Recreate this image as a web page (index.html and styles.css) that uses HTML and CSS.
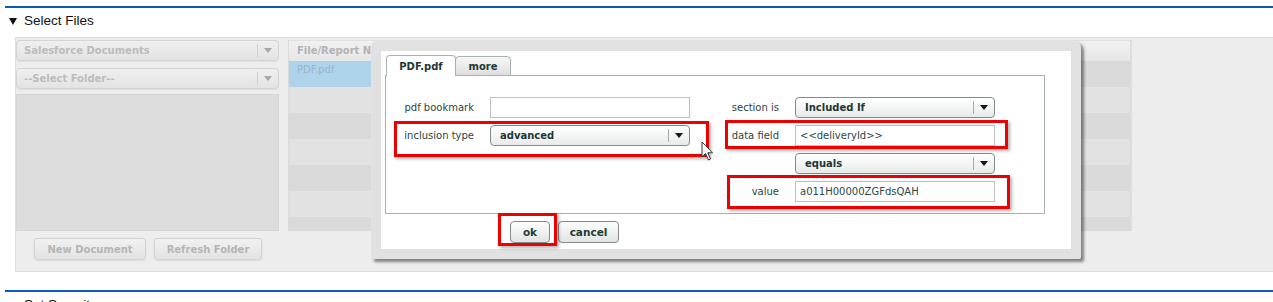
FILE: index.html
```html
<!DOCTYPE html>
<html lang="en">
<head>
  <meta charset="UTF-8">
  <meta name="viewport" content="width=device-width, initial-scale=1.0">
  <title>Select Files</title>
  <link rel="stylesheet" href="styles.css">
</head>
<body>
  <!-- Select Files -->
  <section class="block">
    <h2 class="block-title"><span class="caret"></span>Select Files</h2>

    <div class="panel">
      <div class="sidebar">
        <div class="pick">Salesforce Documents<span class="pick-arrow"></span></div>
        <div class="pick">--Select Folder--<span class="pick-arrow"></span></div>
        <div class="folder-tree"></div>
        <div class="side-actions">
          <button class="soft-btn">New Document</button>
          <button class="soft-btn">Refresh Folder</button>
        </div>
      </div>

      <div class="file-table">
        <div class="file-row head"><div class="cell">File/Report Name</div><div class="cell"></div></div>
        <div class="file-row"><div class="cell selected">PDF.pdf</div><div class="cell"></div></div>
        <div class="file-row"><div class="cell"></div><div class="cell"></div></div>
        <div class="file-row"><div class="cell"></div><div class="cell"></div></div>
        <div class="file-row"><div class="cell"></div><div class="cell"></div></div>
        <div class="file-row"><div class="cell"></div><div class="cell"></div></div>
        <div class="file-row"><div class="cell"></div><div class="cell"></div></div>
        <div class="file-row"><div class="cell"></div><div class="cell"></div></div>
      </div>

      <!-- Document options dialog -->
      <div class="dialog">
        <div class="dialog-body">
          <div class="tabs">
            <div class="tab active">PDF.pdf</div>
            <div class="tab">more</div>
          </div>

          <div class="tab-panel">
            <label class="field-label">pdf bookmark</label>
            <input class="text-field" type="text" value="">
            <label class="field-label">section is</label>
            <div class="dropdown"><span class="dropdown-text">Included If</span><span class="dropdown-toggle"></span></div>

            <label class="field-label">inclusion type</label>
            <div class="dropdown"><span class="dropdown-text">advanced</span><span class="dropdown-toggle"></span></div>
            <label class="field-label">data field</label>
            <input class="text-field" type="text" value="&lt;&lt;deliveryId&gt;&gt;">

            <div class="dropdown col-4"><span class="dropdown-text">equals</span><span class="dropdown-toggle"></span></div>

            <label class="field-label col-3">value</label>
            <input class="text-field" type="text" value="a011H00000ZGFdsQAH">
          </div>

          <div class="dialog-actions">
            <button class="btn">ok</button>
            <button class="btn">cancel</button>
          </div>
        </div>

        <!-- annotation boxes drawn over the dialog -->
        <span class="mark mark-type"></span>
        <span class="mark mark-field"></span>
        <span class="mark mark-value"></span>
        <span class="mark mark-ok"></span>

        <svg class="cursor" width="13" height="21" viewBox="0 0 13 21">
          <path d="M1 1 L1 16 L4.5 12.5 L7.5 19 L9.5 18 L6.8 11.8 L11.5 11.8 Z" fill="#fff" stroke="#333" stroke-width="1"/>
        </svg>
      </div>
    </div>
  </section>

  <!-- Set Security -->
  <section class="block">
    <h2 class="block-title"><span class="caret"></span>Set Security</h2>
  </section>
</body>
</html>
```

FILE: styles.css
```css
/* Reset */
* {
  box-sizing: border-box;
}

body {
  margin: 0;
  padding: 6px 0 0 5px;
  background: #fff;
  font-family: "DejaVu Sans", Verdana, sans-serif;
  font-size: 10px;
  color: #2b4545;
  overflow: hidden;
}

/* Section blocks */
.block {
  border-top: 2px solid #0b5cb6;
  margin-bottom: 18px;
}

.block-title {
  margin: 0;
  padding: 5px 0 8px 4px;
  height: 29px;
  font-family: "Liberation Sans", Arial, sans-serif;
  font-size: 13.5px;
  line-height: 16px;
  font-weight: normal;
  color: #111;
  display: flex;
  align-items: center;
}

.caret {
  width: 0;
  height: 0;
  border-left: 4px solid transparent;
  border-right: 4px solid transparent;
  border-top: 7px solid #111;
  margin-right: 7px;
}

/* Faded background panel */
.panel {
  position: relative;
  margin-left: 10px;
  height: 235px;
  padding-top: 2px;
  background: #ededed;
  border: 1px solid #dcdcdc;
  border-right: none;
  display: grid;
  grid-template-columns: 263px 843px;
  column-gap: 9px;
  align-items: start;
}

.sidebar {
  display: flex;
  flex-direction: column;
}

.pick {
  position: relative;
  height: 21px;
  padding-left: 7px;
  display: flex;
  align-items: center;
  font-weight: bold;
  color: #bcbcbc;
  background: linear-gradient(#efefef, #e3e3e3);
  border: 1px solid #d4d4d4;
  border-radius: 4px;
  box-shadow: 0 1px 1px rgba(0, 0, 0, 0.06);
  margin-bottom: 7px;
}

.pick-arrow {
  position: absolute;
  right: 0;
  top: 3px;
  width: 21px;
  height: 13px;
  border-left: 1px solid #d2d2d2;
}

.pick-arrow::after {
  content: "";
  position: absolute;
  left: 6px;
  top: 4px;
  border-left: 4px solid transparent;
  border-right: 4px solid transparent;
  border-top: 5px solid #a8a8a8;
}

.folder-tree {
  height: 137px;
  margin-top: -2px;
  background: #dcdcdc;
  border: 1px solid #d6d6d6;
}

.side-actions {
  display: flex;
  gap: 8px;
  padding: 7px 0 0 18px;
}

.soft-btn {
  height: 22px;
  padding: 0;
  white-space: nowrap;
  font-family: "DejaVu Sans", Verdana, sans-serif;
  font-size: 10px;
  font-weight: bold;
  color: #b5b5b5;
  background: linear-gradient(#f1f1f1, #e2e2e2);
  border: 1px solid #d2d2d2;
  border-radius: 3px;
  box-shadow: 0 1px 2px rgba(0, 0, 0, 0.08);
}

.soft-btn:first-child {
  width: 112px;
}

.soft-btn:last-child {
  width: 108px;
}

/* File table */
.file-table {
  height: 191px;
  overflow: hidden;
  border: 1px solid #dadada;
  border-top: none;
  box-shadow: 1px 0 1px rgba(0, 0, 0, 0.05);
}

.file-row {
  display: grid;
  grid-template-columns: 420px 1fr;
  height: 26px;
}

.file-row.head {
  height: 21px;
  background: linear-gradient(#f0f0f0, #e6e6e6);
  border-top: 1px solid #e0e0e0;
  font-weight: bold;
  color: #b3b3b3;
}

.file-row.head .cell {
  padding: 4px 8px 0;
}

.file-row:nth-child(even) {
  background: #dadada;
}

.file-row:nth-child(odd):not(.head) {
  background: #e2e2e2;
}

.cell {
  padding: 3px 8px 0;
}

.cell.selected {
  background: #aed4ec;
  color: #98b4c6;
}

/* Dialog */
.dialog {
  position: absolute;
  left: 355px;
  top: 2px;
  width: 710px;
  height: 219px;
  padding: 11px 10px 10px;
  background: #e1e1e1;
  border-radius: 8px 8px 2px 2px;
  box-shadow: 3px 3px 3px rgba(0, 0, 0, 0.45);
}

.dialog-body {
  height: 198px;
  background: #fff;
  padding: 4px 0 0 4px;
}

.tabs {
  display: flex;
  align-items: flex-end;
  height: 21px;
  margin: 0 0 -1px 1px;
}

.tab {
  height: 20px;
  display: flex;
  align-items: center;
  justify-content: center;
  width: 56px;
  font-weight: bold;
  color: #1f3838;
  background: linear-gradient(#f7f7f7, #dedede);
  border: 1px solid #a7b3b3;
  border-radius: 4px 4px 0 0;
}

.tab.active {
  position: relative;
  z-index: 1;
  width: 70px;
  height: 21px;
  margin-right: -1px;
  background: #fff;
  border-bottom: none;
}

.tab-panel {
  width: 660px;
  height: 139px;
  border: 1px solid #a7b3b3;
  padding-top: 21px;
  display: grid;
  grid-template-columns: 88px 200px 73px 200px;
  grid-auto-rows: 21px;
  column-gap: 16px;
  row-gap: 7px;
}

.field-label {
  display: flex;
  align-items: center;
  justify-content: flex-end;
  color: #2b4545;
}

.col-3 {
  grid-column: 3;
}

.col-4 {
  grid-column: 4;
}

.text-field {
  height: 21px;
  margin: 0;
  padding: 0 4px;
  font-family: "DejaVu Sans", Verdana, sans-serif;
  font-size: 10px;
  color: #2b4848;
  border: 1px solid #b9c2c2;
  background: #fff;
  outline: none;
}

.dropdown {
  height: 21px;
  display: flex;
  align-items: center;
  padding-left: 9px;
  font-weight: bold;
  color: #1d3636;
  background: linear-gradient(#fff, #e8ebeb);
  border: 1px solid #7f8c8c;
  border-radius: 4px;
}

.dropdown-text {
  flex: 1;
}

.dropdown-toggle {
  position: relative;
  width: 21px;
  height: 13px;
  border-left: 1px solid #a2aaaa;
}

.dropdown-toggle::after {
  content: "";
  position: absolute;
  left: 6px;
  top: 4px;
  border-left: 4px solid transparent;
  border-right: 4px solid transparent;
  border-top: 5px solid #161616;
}

.dialog-actions {
  display: flex;
  gap: 8px;
  margin: 7px 0 0 125px;
}

.btn {
  height: 22px;
  padding: 0;
  font-family: "DejaVu Sans", Verdana, sans-serif;
  font-size: 10.5px;
  font-weight: bold;
  color: #1f3a3a;
  background: linear-gradient(#fdfdfd, #e2e4e4);
  border: 1px solid #7f8c8c;
  border-radius: 4px;
}

.btn:first-child {
  width: 40px;
}

.btn:last-child {
  width: 61px;
}

/* Red annotation boxes */
.mark {
  position: absolute;
  border: 3px solid #ee0000;
  box-shadow: 2px 2px 3px rgba(0, 0, 0, 0.3);
}

.mark-type {
  left: 23px;
  top: 81px;
  width: 315px;
  height: 36px;
}

.mark-field {
  left: 354px;
  top: 80px;
  width: 283px;
  height: 29px;
}

.mark-value {
  left: 356px;
  top: 135px;
  width: 283px;
  height: 34px;
}

.mark-ok {
  left: 127px;
  top: 173px;
  width: 59px;
  height: 33px;
}

.cursor {
  position: absolute;
  left: 330px;
  top: 101px;
}
```
